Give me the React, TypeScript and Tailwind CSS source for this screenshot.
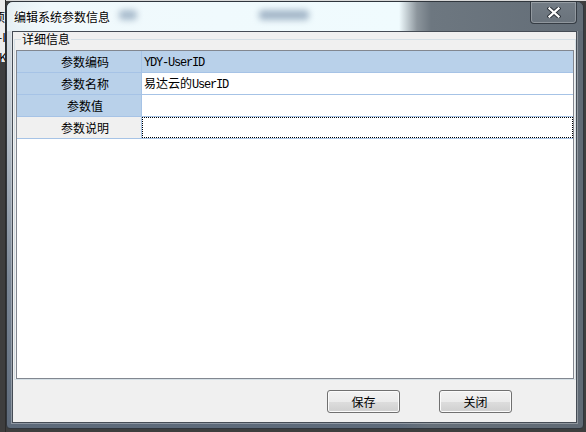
import React from "react";

const CJK = "font-['Noto_Sans_CJK_SC','Noto_Sans',sans-serif]";

function Mono({ children }: { children: React.ReactNode }) {
  return (
    <span className="font-['Liberation_Mono',monospace] tracking-[-1.2px]">
      {children}
    </span>
  );
}

type Row = {
  label: string;
  value: React.ReactNode;
  labelBg: string;
  valueBg: string;
  focus?: boolean;
};

const rows: Row[] = [
  {
    label: "参数编码",
    value: <Mono>YDY-UserID</Mono>,
    labelBg: "bg-[#b9d1ea]",
    valueBg: "bg-[#b9d1ea]",
  },
  {
    label: "参数名称",
    value: (
      <>
        易达云的<Mono>UserID</Mono>
      </>
    ),
    labelBg: "bg-[#b9d1ea]",
    valueBg: "bg-white",
  },
  {
    label: "参数值",
    value: "",
    labelBg: "bg-[#b9d1ea]",
    valueBg: "bg-white",
  },
  {
    label: "参数说明",
    value: "",
    labelBg: "bg-[#f0f0f0]",
    valueBg: "bg-white",
    focus: true,
  },
];

function Button({ children }: { children: React.ReactNode }) {
  return (
    <button
      className={`w-[73px] h-[23px] rounded-[3px] border border-[#707070] bg-[linear-gradient(to_bottom,#f2f2f2_0%,#ebebeb_50%,#dddddd_51%,#cfcfcf_100%)] shadow-[inset_0_0_0_1px_#fbfbfb] text-[12px] leading-[14px] text-black flex items-center justify-center ${CJK}`}
    >
      {children}
    </button>
  );
}

export default function App() {
  return (
    <div className={`relative w-[586px] h-[432px] overflow-hidden bg-[#3e3e3e] ${CJK}`}>
      {/* desktop behind: strip of another window */}
      <div className="absolute left-0 top-0 w-[586px] h-[1px] bg-[#d8d8d8]" />
      <div className="absolute left-0 top-0 w-[6px] h-[62px] bg-[#ececec] overflow-hidden">
        <div className="absolute left-[-7px] top-[7px] text-[12px] leading-[20px] text-black whitespace-nowrap">
          <div>项</div>
          <div className="pl-[5px]">-I</div>
          <div className="pl-[6px]">Ke</div>
        </div>
      </div>
      <div className="absolute left-[5px] top-[0px] w-[1px] h-[432px] bg-[#2c2c2c]" />

      {/* dialog window */}
      <div className="absolute left-[6px] top-[1px] w-[578px] h-[428px] rounded-t-[7px] rounded-b-[4px] border border-[#30363d] overflow-hidden flex flex-col bg-[linear-gradient(to_right,rgba(0,0,0,0)_0%,rgba(0,0,0,0)_68%,#66707a_73%,#606a75_100%),linear-gradient(to_bottom,#dfe5ea_0%,#b4bec8_30%,#7b8796_65%,#5d6a7a_100%)]">
        {/* title bar */}
        <div className="relative h-[29px] shrink-0 flex items-center pl-[7px] bg-[linear-gradient(to_right,#e6eff3_0px,#f0f9fc_40px,#f0fbfe_392px,#8c959c_410px,#6d7780_424px,#636d77_576px)]">
          <div className="absolute left-[112px] top-[8px] w-[18px] h-[10px] rounded-[4px] bg-[#a9bccd] blur-[3px]" />
          <div className="absolute left-[252px] top-[8px] w-[50px] h-[10px] rounded-[4px] bg-[#a3b6c8] blur-[3px]" />
          <span className="relative text-[12px] leading-[14px] text-black [text-shadow:0_0_6px_#ffffff,0_0_3px_#ffffff]">
            编辑系统参数信息
          </span>
          {/* close button */}
          <div className="absolute right-[6px] top-[0px] w-[47px] h-[22px] rounded-b-[4px] border border-t-0 border-[#353c44] shadow-[inset_0_0_0_1px_rgba(255,255,255,0.25)] bg-[linear-gradient(to_bottom,#737c85_0%,#6a737c_100%)] flex items-center justify-center">
            <svg width="14" height="11" viewBox="0 0 14 11">
              <path d="M2.5 1.5 L11.5 9.5 M11.5 1.5 L2.5 9.5" stroke="#2e343b" strokeWidth="4.2" strokeLinecap="square" />
              <path d="M2.5 1.5 L11.5 9.5 M11.5 1.5 L2.5 9.5" stroke="#ffffff" strokeWidth="2.3" strokeLinecap="square" />
            </svg>
          </div>
        </div>

        {/* client area */}
        <div className="ml-[5px] mr-[6px] h-[392px] shrink-0 border border-[#454c55] shadow-[0_0_0_1px_rgba(255,255,255,0.3)] bg-[#f0f0f0] flex flex-col">
          <fieldset className="ml-[1px] border border-[#d5dfe5]">
            <legend className="ml-[6px] px-[1px] text-[12px] leading-[14px] text-black">
              详细信息
            </legend>
            <div className="mt-[4px] ml-[1px] h-[329px] w-[558px] border border-[#828790] bg-white flex flex-col">
              {rows.map((r) => (
                <div key={r.label} className="h-[22px] flex border-b border-[#a6c3e6]">
                  <div
                    className={`w-[125px] shrink-0 border-r border-[#a6c3e6] ${r.labelBg} flex items-center justify-center pl-[12px] text-[12px] leading-[14px] text-black`}
                  >
                    {r.label}
                  </div>
                  <div className={`flex-1 ${r.valueBg} flex items-center text-[12px] leading-[14px] text-black`}>
                    {r.focus ? (
                      <div className="w-full h-full border border-dotted border-black" />
                    ) : (
                      <span className="pl-[2px]">{r.value}</span>
                    )}
                  </div>
                </div>
              ))}
            </div>
          </fieldset>
          <div className="mt-[10px] pl-[314px] flex gap-[39px]">
            <Button>保存</Button>
            <Button>关闭</Button>
          </div>
        </div>
      </div>
    </div>
  );
}
